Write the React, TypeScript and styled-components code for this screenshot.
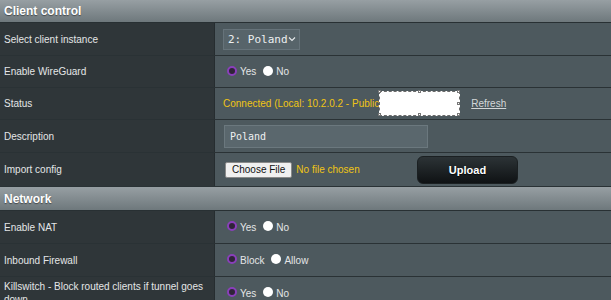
import styled, { createGlobalStyle } from "styled-components";

const GlobalStyle = createGlobalStyle`
  html, body {
    margin: 0;
    padding: 0;
    background: #4d595e;
    font-family: "Liberation Sans", Arial, sans-serif;
  }
`;

const Table = styled.div`
  width: 100%;
  display: flex;
  flex-direction: column;
`;

const Header = styled.div<{ h: number }>`
  height: ${(props) => props.h}px;
  display: flex;
  align-items: center;
  padding-left: 4px;
  background: linear-gradient(to bottom, #979fa3, #6e787c);
  border-bottom: 1px solid #283033;
  color: #ffffff;
  font-weight: bold;
  font-size: 12px;
  text-shadow: 0 1px 1px rgba(0, 0, 0, 0.45);
`;

const Row = styled.div<{ h?: number }>`
  display: flex;
  min-height: ${(props) => props.h ?? 32}px;
  border-bottom: 1px solid #2a3235;
`;

const Label = styled.div`
  width: 215px;
  flex-shrink: 0;
  box-sizing: border-box;
  display: flex;
  align-items: center;
  padding: 3px 8px 3px 4px;
  background: #2f3639;
  border-right: 1px solid #262d30;
  color: #e4e6e7;
  font-size: 10px;
  line-height: 13px;
`;

const Value = styled.div`
  flex: 1;
  display: flex;
  align-items: center;
  padding-left: 8px;
  background: #4d595e;
  color: #e4e6e7;
  font-size: 10px;
`;

const Select = styled.div`
  width: 77px;
  height: 21px;
  box-sizing: border-box;
  display: flex;
  align-items: center;
  justify-content: space-between;
  padding: 0 3px 0 4px;
  background: #57646a;
  border: 1px solid #66737a;
  color: #eef0f1;
  font-family: "DejaVu Sans Mono", monospace;
  font-size: 11px;
`;

const Radio = styled.input.attrs({ type: "radio" })<{ first?: boolean }>`
  appearance: none;
  width: 10px;
  height: 10px;
  box-sizing: border-box;
  margin: 0 3px 0 ${(props) => (props.first ? "4px" : "7px")};
  border-radius: 50%;
  background: #ffffff;
  transform: translateY(-1px);

  &:checked {
    background: #2f2438;
    border: 2px solid #8a3fbb;
  }
`;

const RadioText = styled.span`
  color: #e4e6e7;
  font-size: 10px;
`;

const StatusText = styled.span`
  color: #f0c515;
  font-size: 10px;
  white-space: nowrap;
`;

const Redacted = styled.span`
  position: relative;
  width: 81px;
  height: 25px;
  box-sizing: border-box;
  flex-shrink: 0;
  background: #ffffff;
  border: 1px dashed #6b6b6b;
`;

const Handle = styled.i<{ x: string; y: string }>`
  position: absolute;
  left: ${(props) => props.x};
  top: ${(props) => props.y};
  width: 3px;
  height: 3px;
  margin: -2px 0 0 -2px;
  background: #ffffff;
  border: 1px solid #777;
  box-sizing: border-box;
`;

const Link = styled.span`
  margin-left: 11px;
  color: #d2d6d8;
  font-size: 10px;
  text-decoration: underline;
`;

const TextInput = styled.div`
  width: 204px;
  height: 23px;
  box-sizing: border-box;
  margin-left: 1px;
  display: flex;
  align-items: center;
  padding-left: 5px;
  background: #5a676d;
  border: 1px solid #6b787e;
  color: #eef0f1;
  font-family: "DejaVu Sans Mono", monospace;
  font-size: 10px;
`;

const FileBox = styled.div`
  width: 192px;
  display: flex;
  align-items: center;
  margin-left: 2px;
`;

const FileButton = styled.span`
  height: 16px;
  box-sizing: border-box;
  display: flex;
  align-items: center;
  padding: 0 6px;
  background: #f0f0f0;
  border: 1px solid #8a8a8a;
  border-radius: 2px;
  color: #111;
  font-size: 10px;
`;

const FileName = styled.span`
  margin-left: 4px;
  color: #f0c515;
  font-size: 10px;
`;

const Button = styled.div`
  width: 101px;
  height: 28px;
  box-sizing: border-box;
  display: flex;
  align-items: center;
  justify-content: center;
  background: linear-gradient(to bottom, #2c3336, #0f1214);
  border: 1px solid #1b2022;
  border-radius: 6px;
  color: #ffffff;
  font-weight: bold;
  font-size: 11px;
  text-shadow: 0 1px 1px rgba(0, 0, 0, 0.8);
`;

function RadioPair({ a, b, name }: { a: string; b: string; name: string }) {
  return (
    <>
      <Radio first name={name} defaultChecked />
      <RadioText>{a}</RadioText>
      <Radio name={name} />
      <RadioText>{b}</RadioText>
    </>
  );
}

export default function App() {
  return (
    <>
      <GlobalStyle />
      <Table>
        <Header h={22}>Client control</Header>
        <Row>
          <Label>Select client instance</Label>
          <Value>
            <Select>
              2: Poland
              <svg width="8" height="6" viewBox="0 0 8 6">
                <path d="M1 1.5 L4 4.5 L7 1.5" stroke="#e8ecee" strokeWidth="1.1" fill="none" />
              </svg>
            </Select>
          </Value>
        </Row>
        <Row h={31}>
          <Label>Enable WireGuard</Label>
          <Value>
            <RadioPair a="Yes" b="No" name="wg" />
          </Value>
        </Row>
        <Row h={31}>
          <Label>Status</Label>
          <Value>
            <StatusText>Connected (Local: 10.2.0.2 - Public</StatusText>
            <Redacted>
              <Handle x="0" y="0" />
              <Handle x="50%" y="0" />
              <Handle x="100%" y="0" />
              <Handle x="100%" y="50%" />
              <Handle x="0" y="100%" />
              <Handle x="50%" y="100%" />
              <Handle x="100%" y="100%" />
            </Redacted>
            <Link>Refresh</Link>
          </Value>
        </Row>
        <Row>
          <Label>Description</Label>
          <Value>
            <TextInput>Poland</TextInput>
          </Value>
        </Row>
        <Row h={33}>
          <Label>Import config</Label>
          <Value>
            <FileBox>
              <FileButton>Choose File</FileButton>
              <FileName>No file chosen</FileName>
            </FileBox>
            <Button>Upload</Button>
          </Value>
        </Row>
        <Header h={23}>Network</Header>
        <Row>
          <Label>Enable NAT</Label>
          <Value>
            <RadioPair a="Yes" b="No" name="nat" />
          </Value>
        </Row>
        <Row>
          <Label>Inbound Firewall</Label>
          <Value>
            <RadioPair a="Block" b="Allow" name="fw" />
          </Value>
        </Row>
        <Row>
          <Label>Killswitch - Block routed clients if tunnel goes down</Label>
          <Value>
            <RadioPair a="Yes" b="No" name="ks" />
          </Value>
        </Row>
      </Table>
    </>
  );
}
